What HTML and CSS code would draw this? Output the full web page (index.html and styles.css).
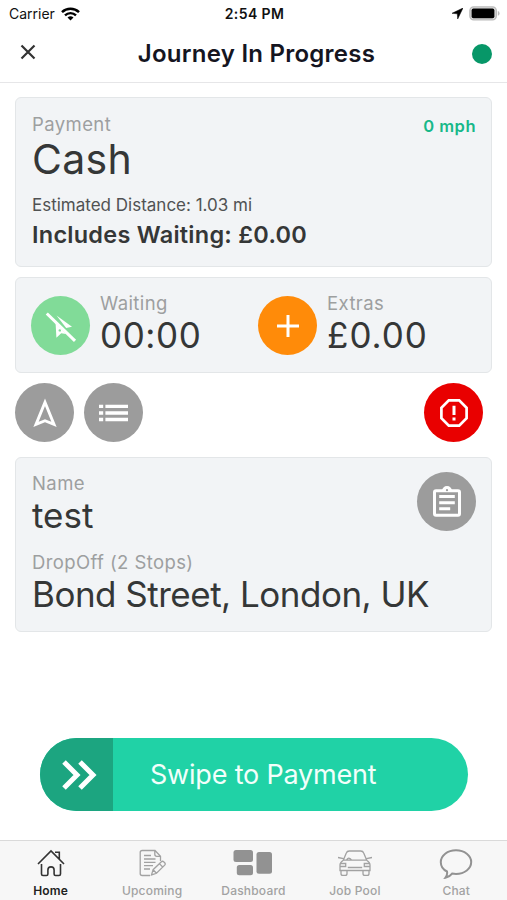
FILE: index.html
```html
<!DOCTYPE html>
<html lang="en">

<head>
    <meta charset="UTF-8">
    <meta name="viewport" content="width=device-width, initial-scale=1.0">
    <title>Journey In Progress</title>
    <link rel="stylesheet" href="styles.css">
</head>

<body>
    <div class="status-bar">
        <div class="carrier">
            <span>Carrier</span>
            <svg width="19" height="14" viewBox="0 0 19 14">
                <path d="M1 5.2a12.3 12.3 0 0 1 17 0" fill="none" stroke="#000" stroke-width="2.5" />
                <path d="M4 8.3a8 8 0 0 1 11 0" fill="none" stroke="#000" stroke-width="2.4" />
                <path d="M6.5 10.6a4.4 4.4 0 0 1 6 0L9.5 13.6z" />
            </svg>
        </div>
        <span class="clock">2:54 PM</span>
        <div class="indicators">
            <svg width="11" height="11" viewBox="0 0 11 11">
                <path d="M11 0L0 5.3l5.3.5.4 5.2z" stroke="#000" stroke-width=".5" />
            </svg>
            <svg width="31" height="15" viewBox="0 0 31 15">
                <rect x=".9" y=".9" width="26.4" height="13" rx="3.8" fill="#ddd" stroke="#bbb" stroke-width="1.4" />
                <rect x="2.6" y="2.6" width="22.8" height="9.6" rx="1.8" />
                <path d="M28.8 5.1q1.8.5 1.8 2.3t-1.8 2.3z" fill="#bbb" />
            </svg>
        </div>
    </div>

    <header class="header">
        <svg class="close" width="16" height="16" viewBox="0 0 16 16">
            <path d="M1.5 1.5l13 13M14.5 1.5l-13 13" />
        </svg>
        <h1>Journey In Progress</h1>
        <span class="online-dot"></span>
    </header>

    <main class="content">
        <!-- Payment -->
        <section class="card payment">
            <div>
                <p class="label">Payment</p>
                <p class="method">Cash</p>
                <p class="distance">Estimated Distance: 1.03 mi</p>
                <p class="includes">Includes Waiting: £0.00</p>
            </div>
            <span class="speed">0 mph</span>
        </section>

        <!-- Waiting and extras -->
        <section class="card charges">
            <div class="charge">
                <span class="circle green">
                    <svg width="32" height="32" viewBox="0 0 32 32">
                        <path d="M11.5 5.5L27 16.8l-5.8 1.2z" fill="#fff" />
                        <path d="M10.6 13.2L21 24l-4.8-.7-4.8 4.5z" fill="#fff" />
                        <circle cx="14.8" cy="20.4" r="1.2" fill="#81db98" />
                        <path d="M1.8 3.5L30 30.8" stroke="#fff" stroke-width="3.1" />
                    </svg>
                </span>
                <div>
                    <p class="label">Waiting</p>
                    <p class="value timer">00:00</p>
                </div>
            </div>
            <div class="charge">
                <span class="circle orange">
                    <svg width="22" height="22" viewBox="0 0 22 22">
                        <path d="M11 0v22M0 11h22" stroke="#fff" stroke-width="3" />
                    </svg>
                </span>
                <div>
                    <p class="label">Extras</p>
                    <p class="value extras">£0.00</p>
                </div>
            </div>
        </section>

        <!-- Actions -->
        <div class="actions">
            <span class="circle">
                <svg width="24" height="30" viewBox="0 0 24 30">
                    <path d="M12 4.3L3 26.4l9-3.7 9 3.7z" fill="none" stroke="#fff" stroke-width="2.9" />
                </svg>
            </span>
            <span class="circle">
                <svg width="29" height="18" viewBox="0 0 29 18">
                    <path d="M0 2.4h4.2M6.4 2.4H29M0 9h4.2M6.4 9H29M0 15.5h4.2M6.4 15.5H29" stroke="#fff" stroke-width="3.3" />
                </svg>
            </span>
            <span class="circle red">
                <svg width="28" height="28" viewBox="0 0 28 28">
                    <path d="M8.8 1.4h10.4l7.4 7.4v10.4l-7.4 7.4H8.8l-7.4-7.4V8.8z" fill="none" stroke="#fff" stroke-width="2.7" />
                    <path d="M14 6.7v9.2M14 18.4v3" stroke="#fff" stroke-width="3" />
                </svg>
            </span>
        </div>

        <!-- Passenger and route -->
        <section class="card trip">
            <div class="passenger">
                <div>
                    <p class="label">Name</p>
                    <p class="value name">test</p>
                </div>
                <span class="circle">
                    <svg width="28" height="31" viewBox="0 0 28 31">
                        <rect x="1.5" y="4.8" width="25" height="24.4" rx="1.5" fill="none" stroke="#fff" stroke-width="3" />
                        <path d="M9 5a5 5 0 0 1 10 0z" fill="#fff" />
                        <circle cx="14" cy="4.2" r="1.1" fill="#9c9c9c" />
                        <path d="M6.2 10.6h15.6M6.2 16.7h15.6M6.2 22.8h11" stroke="#fff" stroke-width="3" />
                    </svg>
                </span>
            </div>
            <p class="label dropoff">DropOff (2 Stops)</p>
            <p class="value address">Bond Street, London, UK</p>
        </section>
    </main>

    <div class="swipe">
        <div class="swipe-handle">
            <svg width="36" height="32" viewBox="0 0 36 32">
                <path d="M3 3l13 13L3 29M19 3l13 13-13 13" fill="none" stroke="#fff" stroke-width="5" />
            </svg>
        </div>
        <span class="swipe-text">Swipe to Payment</span>
    </div>

    <nav class="tabs">
        <a class="tab active">
            <svg width="28" height="28" viewBox="0 0 28 28">
                <path d="M1 15L14 2l13 13M4.5 15v10q0 1.5 1.5 1.5h3.5q1.4 0 1.4-1.4V21a3.1 3.1 0 0 1 6.2 0v4.1q0 1.4 1.4 1.4H22q1.5 0 1.5-1.5V15M18 3.2h4.3V10" />
            </svg>
            <span>Home</span>
        </a>
        <a class="tab">
            <svg width="28" height="28" viewBox="0 0 28 28">
                <path d="M22.5 12V7.2L17 1.5H4.2Q2.2 1.5 2.2 3.5v21q0 2 2 2H12M16.8 1.7v3.6q0 2 2 2h3.6M6 6.5h7M6 10h11.5M6 13.3h11.5M6 16.6h9M6 20h6" />
                <path d="M13.5 25.9l1.6-5.2 8.3-8q1.2-1 2.5.2l.8.9q1 1.1 0 2.3l-8.2 8.2zM15.1 20.7l3.4 3.6M21.4 14.6l3.5 3.6" />
            </svg>
            <span>Upcoming</span>
        </a>
        <a class="tab">
            <svg width="40" height="28" viewBox="0 0 40 28">
                <g fill="#929292" stroke="none">
                    <rect x=".5" y="1" width="19.5" height="12" rx="2.5" />
                    <rect x="3.8" y="16" width="16.2" height="10.3" rx="2.5" />
                    <rect x="23.5" y="3" width="15.5" height="21.7" rx="2.5" />
                </g>
            </svg>
            <span>Dashboard</span>
        </a>
        <a class="tab">
            <svg width="36" height="28" viewBox="0 0 36 28">
                <path d="M6.3 11.2l3-7.2Q10 2 12.3 2h11.4Q26 2 26.7 4l3 7.2zM6.3 11.2Q3 13.2 3 16v5.5h30V16q0-2.8-3.3-4.8M1 8.5l5.5 1.2M35 8.5l-5.5 1.2M4 21.8v2.6q0 2 1.8 2h2.4q1.8 0 1.8-2v-2.6M26 21.8v2.6q0 2 1.8 2h2.4q1.8 0 1.8-2v-2.6M3.5 14.5h5.2v3H3.2M32.5 14.5h-5.2v3h5.5M10.8 18.5h14.4M9.5 11q1.5-2.7 3.5-1.4l1.5 1.4" />
            </svg>
            <span>Job Pool</span>
        </a>
        <a class="tab chat">
            <svg width="34" height="30" viewBox="0 0 34 30">
                <path d="M8 22.5C4 20.5 1.8 17 1.8 13.2 1.8 6.5 8.5 1.3 17 1.3s15.2 5.2 15.2 11.8S25.5 25 17 25q-2 0-3.9-.4Q10.5 28 6.5 28.7 8.7 25.8 8 22.5z" />
            </svg>
            <span>Chat</span>
        </a>
    </nav>
</body>

</html>
```

FILE: styles.css
```css
* {
    margin: 0;
    padding: 0;
    box-sizing: border-box;
}

body {
    font-family: Inter, "Liberation Sans", sans-serif;
    background: #ffffff;
    color: #353737;
    height: 100vh;
    display: flex;
    flex-direction: column;
    overflow: hidden;
}

svg {
    display: block;
    flex: none;
}

p {
    white-space: nowrap;
}

.status-bar {
    height: 27px;
    padding: 0 7px 0 9px;
    display: grid;
    grid-template-columns: 1fr auto 1fr;
    align-items: center;
    font-size: 14px;
    color: #111;
}

.carrier,
.indicators {
    display: flex;
    align-items: center;
    gap: 6px;
}

.indicators {
    justify-content: flex-end;
}

.clock {
    font-weight: 600;
    letter-spacing: 0.4px;
}

.header {
    height: 56px;
    padding: 0 15px 2px 20px;
    display: flex;
    align-items: center;
    justify-content: space-between;
    border-bottom: 1px solid #e6e6e8;
}

.header h1 {
    font-size: 24px;
    font-weight: 600;
    letter-spacing: 0.25px;
    margin-left: 5px;
    color: #15151f;
}

.close {
    margin-bottom: 3px;
}

.close path {
    stroke: #333;
    stroke-width: 2.2;
}

.online-dot {
    width: 20px;
    height: 20px;
    border-radius: 50%;
    background: #079768;
}

.content {
    padding: 14px 15px 0;
}

.card {
    background: #f2f4f6;
    border: 1px solid #e3e6e8;
    border-radius: 6px;
    padding: 15px;
    margin-bottom: 10px;
}

.label {
    font-size: 18.5px;
    line-height: 22px;
    letter-spacing: 0.4px;
    color: #9d9fa0;
}

.value {
    font-size: 35px;
    line-height: 40px;
}

.payment {
    height: 170px;
    display: flex;
    justify-content: space-between;
}

.method {
    font-size: 41px;
    line-height: 48px;
    letter-spacing: 0.3px;
}

.distance {
    font-size: 17px;
    line-height: 22px;
    margin-top: 11px;
    color: #505253;
}

.includes {
    font-size: 23.5px;
    line-height: 28px;
    margin-top: 5px;
    font-weight: 600;
    letter-spacing: 0.25px;
}

.speed {
    font-size: 16.5px;
    line-height: 26px;
    font-weight: 600;
    letter-spacing: 0.5px;
    color: #18b889;
}

.charges {
    height: 96px;
    display: grid;
    grid-template-columns: 227px 1fr;
}

.charge {
    display: flex;
    gap: 10px;
}

.charge .label {
    margin-top: -1px;
    margin-bottom: 1px;
}

.charge .circle {
    margin-top: 3px;
}

.timer {
    letter-spacing: 0.6px;
}

.extras {
    letter-spacing: 1px;
}

.circle {
    width: 59px;
    height: 59px;
    flex: none;
    display: flex;
    align-items: center;
    justify-content: center;
    border-radius: 50%;
    background: #9c9c9c;
}

.green {
    background: #81db98;
}

.orange {
    background: #ff8b09;
}

.red {
    background: #e90000;
    margin-left: auto;
    margin-right: 9px;
}

.actions {
    display: flex;
    gap: 10px;
    margin-bottom: 15px;
}

.payment,
.trip {
    padding-left: 16px;
}

.trip {
    height: 175px;
    padding-top: 14px;
}

.passenger {
    height: 79px;
    display: flex;
    justify-content: space-between;
}

.name {
    margin-top: 1px;
}

.address {
    margin-top: 1px;
    letter-spacing: -0.5px;
}

.swipe {
    width: 428px;
    height: 73px;
    margin: 96px auto 0 40px;
    display: flex;
    align-items: center;
    border-radius: 37px;
    background: #20d2a6;
    overflow: hidden;
}

.swipe-handle {
    width: 73px;
    height: 73px;
    display: flex;
    align-items: center;
    justify-content: center;
    background: #1ca580;
    padding-left: 5px;
}

.swipe-text {
    margin-left: 37px;
    font-size: 27px;
    letter-spacing: -0.2px;
    color: #f2fffb;
}

.tabs {
    height: 60px;
    margin-top: auto;
    display: grid;
    grid-template-columns: repeat(5, 1fr);
    background: #f7f7f7;
    border-top: 1px solid #dadada;
}

.tab {
    display: flex;
    flex-direction: column;
    align-items: center;
    padding-top: 8px;
    font-size: 12px;
    line-height: 14px;
    font-weight: 500;
    letter-spacing: 0.2px;
    color: #a2a2a2;
}

.tab svg {
    fill: none;
    stroke: #a2a2a2;
    stroke-width: 1.3;
}

.tab span {
    margin-top: 7px;
}

.tab.active {
    color: #222;
    font-weight: 600;
}

.tab.active svg {
    stroke: #333;
    stroke-width: 1.6;
}

.tab.chat svg {
    stroke: #929292;
    stroke-width: 2;
    margin-bottom: -2px;
}
```
